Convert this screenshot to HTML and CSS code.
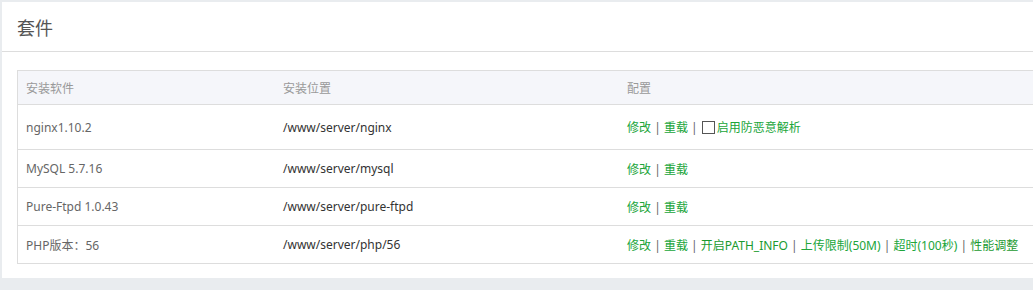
FILE: index.html
```html
<!DOCTYPE html>
<html lang="zh-CN">
<head>
<meta charset="utf-8">
<title>套件</title>
<link rel="stylesheet" href="styles.css">
</head>
<body>
<div class="panel">
  <div class="panel-head">套件</div>
  <div class="panel-body">
    <table class="grid">
      <thead>
        <tr><th class="c1">安装软件</th><th class="c2">安装位置</th><th class="c3">配置</th></tr>
      </thead>
      <tbody>
        <tr class="tall">
          <td class="c1">nginx1.10.2</td>
          <td class="c2 path">/www/server/nginx</td>
          <td class="c3"><a class="lk">修改</a> | <a class="lk">重载</a> | <label class="chk"><span class="box"></span><a class="lk">启用防恶意解析</a></label></td>
        </tr>
        <tr>
          <td class="c1">MySQL 5.7.16</td>
          <td class="c2 path">/www/server/mysql</td>
          <td class="c3"><a class="lk">修改</a> | <a class="lk">重载</a></td>
        </tr>
        <tr>
          <td class="c1">Pure-Ftpd 1.0.43</td>
          <td class="c2 path">/www/server/pure-ftpd</td>
          <td class="c3"><a class="lk">修改</a> | <a class="lk">重载</a></td>
        </tr>
        <tr>
          <td class="c1">PHP版本：56</td>
          <td class="c2 path">/www/server/php/56</td>
          <td class="c3"><a class="lk">修改</a> | <a class="lk">重载</a> | <a class="lk dk">开启PATH_INFO</a> | <a class="lk">上传限制(50M)</a> | <a class="lk">超时(100秒)</a> | <a class="lk dk">性能调整</a></td>
        </tr>
      </tbody>
    </table>
  </div>
</div>
</body>
</html>
```
FILE: styles.css
```css
html, body { margin: 0; padding: 0; }
body {
  background: #e9ecef;
  font-family: "Noto Sans", "Noto Sans CJK SC", sans-serif;
  height: 290px;
  overflow: hidden;
}
.panel {
  background: #fff;
  margin: 2px 0 0 2px;
  width: 1040px;
  height: 276px;
  overflow: hidden;
}
.panel-head {
  height: 49px;
  line-height: 50px;
  padding-left: 15px;
  font-size: 18px;
  color: #555;
  border-bottom: 1px solid #ddd;
  font-family: "Noto Sans CJK SC", sans-serif;
}
.panel-body {
  padding: 18px 0 0 15px;
}
.grid {
  border-collapse: collapse;
  width: 1100px;
  border: 1px solid #ddd;
  font-size: 12px;
}
.grid th {
  background: #f5f6fa;
  color: #999;
  font-weight: normal;
  text-align: left;
  height: 33px;
  padding: 0 8px;
  border-bottom: 1px solid #ddd;
  font-family: "Noto Sans CJK SC", sans-serif;
}
.grid td {
  height: 37px;
  padding: 0 8px;
  border-bottom: 1px solid #ddd;
  color: #666;
  font-size: 12px;
}
.grid tr.tall td { height: 44px; }
.c1 { width: 241px; }
.c2 { width: 328px; }
.grid td.path { color: #333; }
.grid td.c3 { color: #666; }
.lk { color: #20a53a; text-decoration: none; }
.lk.dk { color: #1a9a30; }
.chk { display: inline-flex; align-items: center; vertical-align: top; }
.box {
  display: inline-block;
  width: 11px;
  height: 11px;
  border: 1px solid #555;
  margin: 0 2px 0 1px;
}
```
